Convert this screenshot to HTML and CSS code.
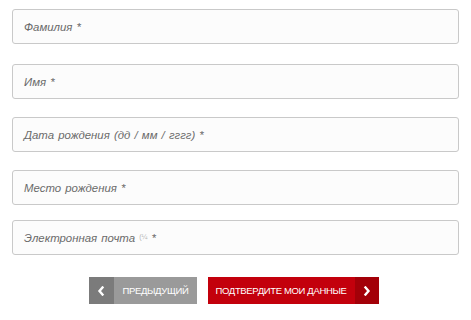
FILE: index.html
```html
<!DOCTYPE html>
<html lang="ru">
<head>
<meta charset="utf-8">
<link rel="stylesheet" href="styles.css">
</head>
<body>
<form class="form">
  <div class="field field-1"><span class="label">Фамилия *</span></div>
  <div class="field field-2"><span class="label">Имя *</span></div>
  <div class="field field-3"><span class="label">Дата рождения (дд / мм / гггг) *</span></div>
  <div class="field field-4"><span class="label">Место рождения *</span></div>
  <div class="field field-5"><span class="label">Электронная почта <span class="hint">(¼</span> *</span></div>
  <div class="actions">
    <button type="button" class="btn btn-prev">
      <span class="chev chev-left"><svg width="8" height="10" viewBox="0 0 8 10"><polyline points="5.5,1.5 2.5,5 5.5,8.5" fill="none" stroke="#fff" stroke-width="2.4" stroke-linecap="square"/></svg></span>
      <span class="btn-text">ПРЕДЫДУЩИЙ</span>
    </button>
    <button type="button" class="btn btn-next">
      <span class="btn-text">ПОДТВЕРДИТЕ МОИ ДАННЫЕ</span>
      <span class="chev chev-right"><svg width="8" height="10" viewBox="0 0 8 10"><polyline points="2.5,1.5 5.5,5 2.5,8.5" fill="none" stroke="#fff" stroke-width="2.4" stroke-linecap="square"/></svg></span>
    </button>
  </div>
</form>
</body>
</html>
```
FILE: styles.css
```css
html, body {
  margin: 0;
  padding: 0;
  background: #ffffff;
}
body {
  font-family: "Liberation Sans", Arial, sans-serif;
}
.form {
  display: flex;
  flex-direction: column;
  padding: 9px 12px 0 12px;
  width: 447px;
}
.field {
  box-sizing: border-box;
  height: 35px;
  border: 1px solid #c9c9c9;
  border-radius: 3px;
  background: #fcfcfc;
  display: flex;
  align-items: center;
  padding-left: 11px;
}
.field-1 { margin-bottom: 20px; }
.field-2 { margin-bottom: 18px; }
.field-3 { margin-bottom: 18px; }
.field-4 { margin-bottom: 15px; }
.field-5 { margin-bottom: 22px; }
.label {
  font-family: "Liberation Sans", Arial, sans-serif;
  font-style: italic;
  font-size: 11.4px;
  color: #6a6a6a;
  word-spacing: 1px;
}
.hint {
  font-style: normal;
  font-size: 7px;
  color: #b5b5b5;
  vertical-align: 3px;
}
.actions {
  display: flex;
  justify-content: center;
  gap: 11px;
  padding-right: 4px;
}
.btn {
  display: flex;
  align-items: stretch;
  height: 27px;
  border: 0;
  padding: 0;
  margin: 0;
  font-family: "Liberation Sans", Arial, sans-serif;
  font-size: 9.5px;
  letter-spacing: -0.35px;
  color: #ffffff;
  cursor: pointer;
}
.btn-text {
  display: flex;
  align-items: center;
}
.chev {
  display: flex;
  align-items: center;
  justify-content: center;
  width: 25px;
}
.btn-prev {
  width: 108px;
  background: #9a9a9a;
}
.btn-prev .chev { background: #7b7b7b; }
.btn-prev .btn-text { padding-left: 9px; }
.btn-next {
  width: 171px;
  background: #c3000c;
}
.btn-next .btn-text { padding-left: 8px; flex: 1; }
.btn-next .chev { background: #a30008; width: 24px; }
```
